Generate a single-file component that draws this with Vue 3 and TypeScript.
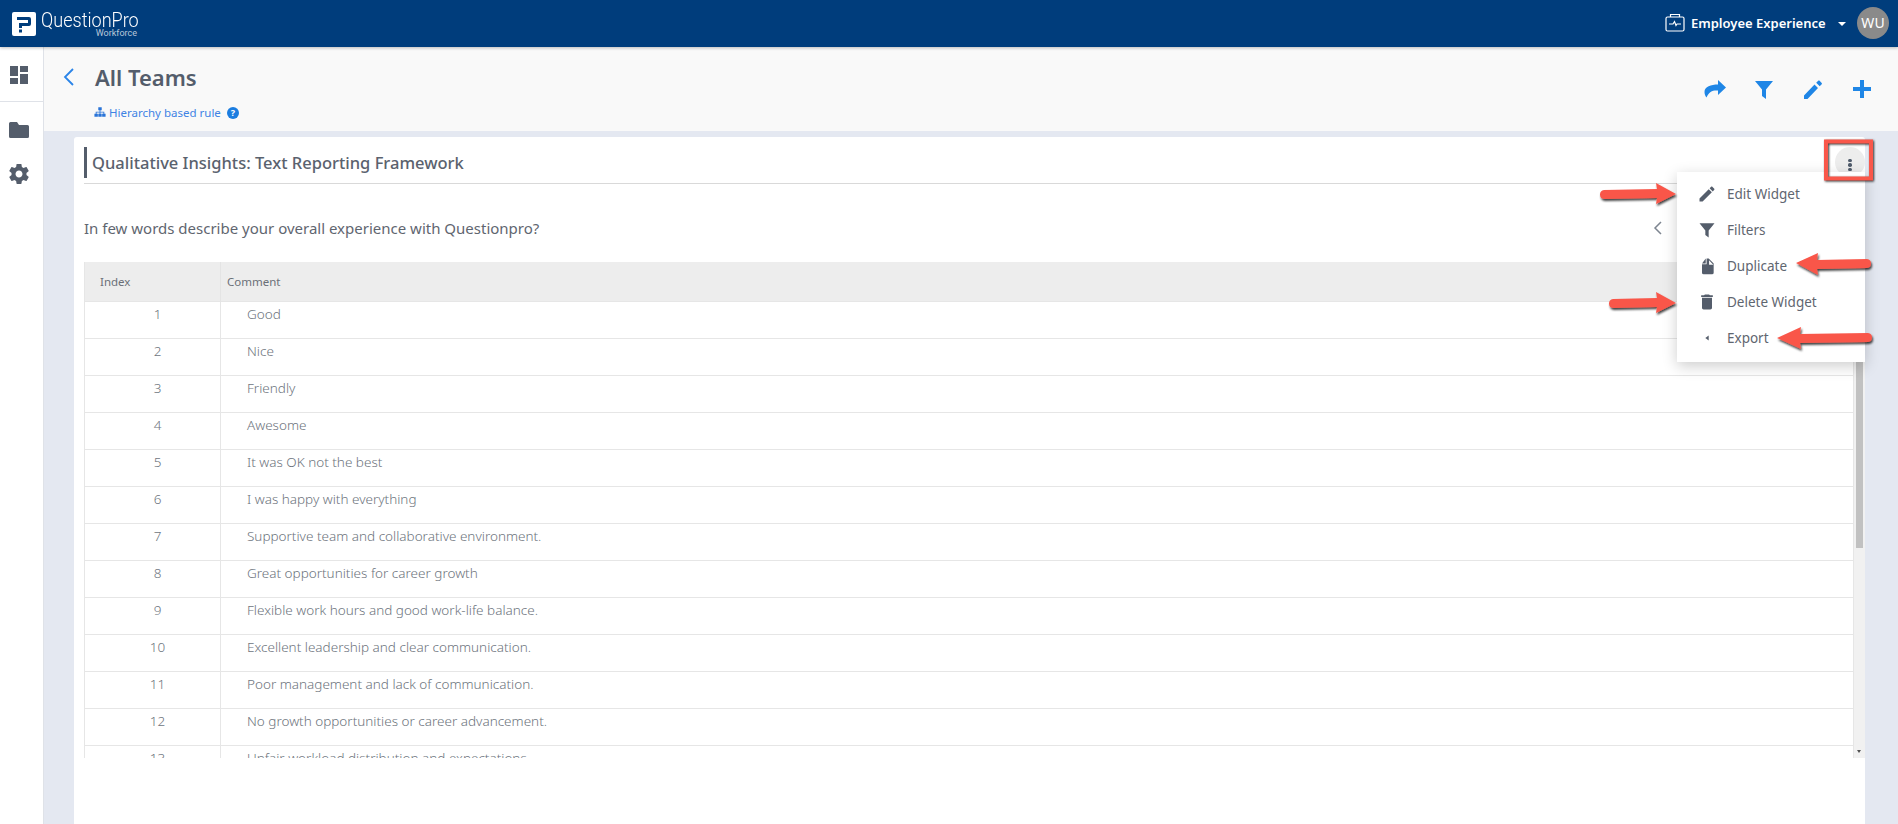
<script setup lang="ts">
const comments: string[] = [
  "Good",
  "Nice",
  "Friendly",
  "Awesome",
  "It was OK not the best",
  "I was happy with everything",
  "Supportive team and collaborative environment.",
  "Great opportunities for career growth",
  "Flexible work hours and good work-life balance.",
  "Excellent leadership and clear communication.",
  "Poor management and lack of communication.",
  "No growth opportunities or career advancement.",
  "Unfair workload distribution and expectations.",
];

const menuItems = [
  { label: "Edit Widget", d: "M3 17.25V21h3.75L17.81 9.94l-3.75-3.75L3 17.25zM20.71 7.04c.39-.39.39-1.02 0-1.41l-2.34-2.34c-.39-.39-1.02-.39-1.41 0l-1.83 1.83 3.75 3.75 1.83-1.83z" },
  { label: "Filters", d: "M3 4h18l-7 8.5V21l-4-3v-5.5z" },
  { label: "Duplicate", d: "M11.500 3H14l6 6v11a2 2 0 0 1-2 2H8a2 2 0 0 1-2-2V10h5.500zM10.500 3v6H6zM14.500 5v5.500H19.500z" },
  { label: "Delete Widget", d: "M6 19c0 1.1.9 2 2 2h8c1.1 0 2-.9 2-2V7H6v12zM19 4h-3.5l-1-1h-5l-1 1H5v2h14V4z" },
  { label: "Export", d: "M14 9l-4 3 4 3z" },
];
</script>

<template>
  <div class="page">
    <header class="topbar">
      <div class="brand">
        <svg class="logo" viewBox="0 0 24 24">
          <rect width="24" height="24" rx="2" fill="#fff" />
          <path d="M5 5h12a2 2 0 0 1 2 2v5a2 2 0 0 1-2 2h-7v2H7v-5h9V8H5z" fill="#003d7c" />
          <rect x="7" y="17.500" width="3" height="3" fill="#003d7c" />
        </svg>
        <div class="brand-text">
          <span class="brand-name">QuestionPro</span>
          <span class="brand-sub">Workforce</span>
        </div>
      </div>
      <div class="product">
        <svg class="product-icon" viewBox="0 0 20 20" fill="none" stroke="#fff" stroke-width="1.2">
          <rect x="1" y="4" width="18" height="14" rx="1.5" />
          <path d="M5.500 4V1.500h9V4" />
          <path d="M4 11h4l1.500-2.500 1.500 4 1-1.500h4" />
        </svg>
        <span class="product-name">Employee Experience</span>
        <span class="caret"></span>
        <span class="avatar">WU</span>
      </div>
    </header>

    <div class="layout">
      <aside class="sidebar">
        <div class="side-top">
          <svg viewBox="0 0 24 24" width="24" height="24"><path d="M3 13h8V3H3v10zm0 8h8v-6H3v6zm10 0h8V11h-8v10zm0-18v6h8V3h-8z" /></svg>
        </div>
        <div class="side-rest">
          <svg viewBox="0 0 24 24" width="24" height="24"><path d="M10 4H3.500A1.500 1.500 0 0 0 2 5.500v13A1.500 1.500 0 0 0 3.500 20h17a1.500 1.500 0 0 0 1.500-1.500v-10A1.500 1.500 0 0 0 20.500 7H12z" /></svg>
          <svg viewBox="0 0 24 24" width="24" height="24"><path d="M19.430 12.980c.04-.32.07-.64.07-.98s-.03-.66-.07-.98l2.110-1.650c.19-.15.24-.42.120-.64l-2-3.460c-.12-.22-.39-.3-.61-.22l-2.490 1c-.52-.4-1.080-.73-1.690-.98l-.38-2.650C14.460 2.180 14.250 2 14 2h-4c-.25 0-.46.18-.49.420l-.38 2.650c-.61.25-1.170.59-1.690.98l-2.490-1c-.23-.09-.49 0-.61.22l-2 3.460c-.13.22-.07.49.12.64l2.110 1.650c-.04.32-.07.65-.07.98s.03.66.07.98l-2.110 1.650c-.19.15-.24.42-.12.64l2 3.460c.12.22.39.3.61.22l2.490-1c.52.4 1.080.73 1.690.98l.38 2.650c.03.24.24.42.49.42h4c.25 0 .46-.18.49-.42l.38-2.650c.61-.25 1.170-.59 1.690-.98l2.490 1c.23.09.49 0 .61-.22l2-3.460c.12-.22.07-.49-.12-.64l-2.110-1.650zM12 15.500c-1.930 0-3.500-1.570-3.500-3.500s1.570-3.500 3.500-3.500 3.500 1.570 3.500 3.500-1.570 3.500-3.500 3.500z" /></svg>
        </div>
      </aside>

      <main class="main">
        <section class="head">
          <div class="head-left">
            <div class="title-row">
              <svg class="back" viewBox="0 0 12 18" fill="none" stroke="#2a84e8" stroke-width="1.800">
                <path d="M10 1L2 9l8 8" />
              </svg>
              <h1>All Teams</h1>
            </div>
            <div class="rule">
              <svg viewBox="0 0 14 12" width="12" height="11" fill="#2a74d8">
                <path d="M5 0h4v3.500H7.500V5H12v2.500h1.500V11h-4V7.500H11V6H7.500v1.500H9V11H5V7.500h1.500V6H3v1.500h1.500V11h-4V7.500H2V5h4.500V3.500H5z" />
              </svg>
              <span>Hierarchy based rule</span>
              <span class="help">?</span>
            </div>
          </div>
          <div class="head-actions">
            <svg viewBox="0 0 24 24" width="24" height="24"><path d="M15 3l8 7.500-8 7.500v-4.500c-5-.5-9 .8-11.500 7-1-1-2-3-2-5.500C1.500 9.500 8 7.500 15 7.500z" /></svg>
            <svg viewBox="0 0 24 24" width="24" height="24"><path d="M3 4h18l-7 8.500V22l-4-3v-6.500z" /></svg>
            <svg viewBox="0 0 24 24" width="24" height="24"><path d="M3 18.500V22h3.500L17 11l-3.500-3.500zM20.700 7.300c.4-.4.4-1 0-1.400l-2.100-2.100c-.4-.4-1-.4-1.400 0L15.200 5.800l3.500 3.500z" /></svg>
            <svg viewBox="0 0 24 24" width="24" height="24"><path d="M10 3h4v7h7v4h-7v7h-4v-7H3v-4h7z" /></svg>
          </div>
        </section>

        <section class="content">
          <div class="card">
            <div class="card-head">
              <h2>Qualitative Insights: Text Reporting Framework</h2>
              <button class="dots"><i></i><i></i><i></i></button>
            </div>

            <div class="question">
              <p>In few words describe your overall experience with Questionpro?</p>
              <svg class="pager" viewBox="0 0 10 14" fill="none" stroke="#7d8590" stroke-width="1.500"><path d="M8 1L2 7l6 6" /></svg>
            </div>

            <div class="table-wrap">
              <table>
                <colgroup>
                  <col class="col-index" />
                  <col />
                </colgroup>
                <thead>
                  <tr>
                    <th>Index</th>
                    <th>Comment</th>
                  </tr>
                </thead>
                <tbody>
                  <tr v-for="(c, i) in comments" :key="c">
                    <td class="idx">{{ i + 1 }}</td>
                    <td class="txt">{{ c }}</td>
                  </tr>
                </tbody>
              </table>
              <div class="scrollbar">
                <div class="thumb"></div>
                <span class="down"></span>
              </div>
            </div>

            <ul class="menu">
              <li v-for="m in menuItems" :key="m.label">
                <svg viewBox="0 0 24 24" width="20" height="20"><path :d="m.d" fill-rule="evenodd" /></svg>
                <span>{{ m.label }}</span>
              </li>
            </ul>
          </div>
        </section>
      </main>
    </div>

    <!-- screenshot annotations drawn on top of the page -->
    <svg class="marks" viewBox="0 0 1898 824" width="1898" height="824">
      <defs>
        <filter id="sh" x="-20%" y="-40%" width="140%" height="180%">
          <feDropShadow dx="1" dy="2" stdDeviation="1.200" flood-color="#000" flood-opacity="0.75" />
        </filter>
      </defs>
      <rect class="box" x="1826" y="141.500" width="45" height="37" />
      <g filter="url(#sh)" fill="#f9574a">
        <path d="M1604 190l53-1-1-6 20 11-20 10 1-6-53 1q-4-.500-4-4.500t4-4.500z" />
        <path d="M1796 263l22-10-1 7 50-1q4 .500 4 4.500t-4 4.500l-50 1 1 6z" />
        <path d="M1613 299l44-1-1-6 20 11-20 10 1-6-44 1q-4-.500-4-4.500t4-4.500z" />
        <path d="M1777 338l24-11-1 7 68-1q4 .500 4 4.500t-4 4.500l-68 1 1 6z" />
      </g>
    </svg>
  </div>
</template>

<style>
html,
body {
  margin: 0;
  padding: 0;
  overflow: hidden;
}
</style>

<style scoped>
.page {
  position: relative;
  width: 1898px;
  height: 824px;
  overflow: hidden;
  font-family: "Noto Sans", Roboto, sans-serif;
  color: #545d6b;
  background: #e4e8f1;
}

.topbar {
  position: relative;
  z-index: 3;
  display: flex;
  justify-content: space-between;
  align-items: center;
  height: 47px;
  padding: 0 9px 0 12px;
  background: #003d7c;
  box-shadow: 0 1px 3px rgba(0, 0, 0, 0.25);
}
.brand {
  display: flex;
  align-items: center;
  gap: 5px;
}
.logo {
  width: 24px;
  height: 24px;
}
.brand-text {
  display: flex;
  flex-direction: column;
  align-items: flex-end;
  width: 96px;
  color: #fff;
  margin-top: 1px;
}
.brand-name {
  align-self: flex-start;
  font-family: Roboto, sans-serif;
  font-size: 21px;
  font-weight: 300;
  line-height: 18px;
  white-space: nowrap;
  transform: scaleX(0.86);
  transform-origin: left center;
}
.brand-sub {
  font-family: Roboto, sans-serif;
  font-size: 9px;
  line-height: 8px;
  color: #b9c8da;
}
.product {
  display: flex;
  align-items: center;
  color: #fff;
  margin-top: -2px;
}
.product-icon {
  width: 20px;
  height: 20px;
  margin-right: 6px;
}
.product-name {
  font-size: 13px;
  font-weight: 600;
  width: 135px;
  white-space: nowrap;
}
.caret {
  width: 0;
  height: 0;
  margin: 2px 11px 0 12px;
  border-left: 4px solid transparent;
  border-right: 4px solid transparent;
  border-top: 4px solid #fff;
}
.avatar {
  display: flex;
  align-items: center;
  justify-content: center;
  width: 32px;
  height: 32px;
  border-radius: 50%;
  background: #8a8a8a;
  font-size: 14px;
  color: #fff;
}

.layout {
  display: flex;
  height: 777px;
}
.sidebar {
  width: 43px;
  background: #fff;
  border-right: 1px solid #dfe2e8;
  flex: none;
}
.sidebar svg {
  display: block;
  fill: #545d6b;
}
.side-top {
  height: 55px;
  padding: 16px 0 0 7px;
  box-sizing: border-box;
  border-bottom: 1px solid #dfe2e8;
}
.side-rest {
  display: flex;
  flex-direction: column;
  gap: 20px;
  padding: 16px 0 0 7px;
}

.main {
  flex: 1;
  min-width: 0;
  display: flex;
  flex-direction: column;
}
.head {
  display: flex;
  justify-content: space-between;
  height: 84px;
  padding: 0 24px 0 19px;
  box-sizing: border-box;
  background: #f9f9f9;
}
.title-row {
  display: flex;
  align-items: center;
  gap: 20px;
  height: 58px;
  padding-top: 2px;
  box-sizing: border-box;
}
.back {
  width: 12px;
  height: 18px;
}
h1 {
  margin: 0;
  font-size: 22px;
  font-weight: 600;
  color: #545d6b;
}
.rule {
  display: flex;
  align-items: center;
  gap: 3px;
  padding-left: 31px;
  font-size: 11.5px;
  color: #3f83e4;
}
.help {
  display: flex;
  align-items: center;
  justify-content: center;
  width: 12px;
  height: 12px;
  margin-left: 3px;
  border-radius: 50%;
  background: #1b7de0;
  color: #fff;
  font-size: 9px;
  font-weight: 700;
}
.head-actions {
  display: flex;
  gap: 25px;
  padding-top: 30px;
}
.head-actions svg {
  fill: #1f86e6;
}

.content {
  flex: 1;
  min-height: 0;
  padding: 6px 33px 0 30px;
}
.card {
  position: relative;
  height: 100%;
  box-sizing: border-box;
  padding: 10px 11px 0 10px;
  background: #fff;
  border-radius: 3px 3px 0 0;
}
.card-head {
  display: flex;
  align-items: flex-start;
  justify-content: space-between;
  height: 31px;
  padding-bottom: 5px;
  border-bottom: 1px solid #d9d9d9;
}
h2 {
  margin: 0;
  padding-left: 5px;
  border-left: 3px solid #545d6b;
  font-size: 16.5px;
  font-weight: 500;
  line-height: 31px;
  color: #5a626e;
}
.dots {
  flex: none;
  display: flex;
  flex-direction: column;
  align-items: center;
  justify-content: center;
  gap: 1px;
  width: 30px;
  height: 30px;
  margin: 0 -11px 0 0;
  padding: 6px 0 0;
  border: none;
  border-radius: 50%;
  background: #ededed;
}
.dots i {
  width: 3.500px;
  height: 3.500px;
  border-radius: 50%;
  background: #4f5b6b;
}
.question {
  display: flex;
  justify-content: space-between;
  align-items: center;
  height: 78px;
  padding: 10px 191px 0 0;
  box-sizing: border-box;
}
.question p {
  margin: 0;
  font-size: 15px;
  color: #5f6670;
}
.pager {
  width: 10px;
  height: 14px;
}

.table-wrap {
  display: flex;
  height: 496px;
  margin-right: -11px;
  overflow: hidden;
}
table {
  flex: 1;
  min-width: 0;
  height: fit-content;
  table-layout: fixed;
  border-collapse: collapse;
  border-left: 1px solid #e6e6e6;
}
.col-index {
  width: 136px;
}
th {
  height: 39px;
  padding: 0 0 0 6px;
  text-align: left;
  font-size: 11.5px;
  font-weight: 400;
  color: #6b7078;
  background: #ededed;
  border-right: 1px solid #e4e4e4;
}
th:first-child {
  padding-left: 15px;
}
td {
  height: 37px;
  padding: 3px 0 0;
  vertical-align: top;
  font-size: 13.500px;
  font-weight: 300;
  color: #6d747d;
  border-top: 1px solid #e6e6e6;
  border-bottom: 1px solid #e6e6e6;
  box-sizing: border-box;
  line-height: 18px;
}
td.idx {
  padding-left: 10px;
  text-align: center;
  border-right: 1px solid #e6e6e6;
}
td.txt {
  padding-left: 26px;
}
.scrollbar {
  position: relative;
  flex: none;
  width: 12px;
  background: #f1f1f1;
  border-left: 1px solid #e6e6e6;
  box-sizing: border-box;
}
.thumb {
  position: absolute;
  left: 2px;
  top: 18px;
  width: 7px;
  height: 268px;
  background: #c1c1c1;
}
.down {
  position: absolute;
  left: 3px;
  bottom: 5px;
  width: 0;
  height: 0;
  border-left: 2.500px solid transparent;
  border-right: 2.500px solid transparent;
  border-top: 3px solid #505050;
}

.menu {
  position: absolute;
  top: 35px;
  right: 0;
  width: 188px;
  margin: 0;
  padding: 4px 0 6px;
  box-sizing: border-box;
  list-style: none;
  background: #fff;
  box-shadow: 0 4px 14px rgba(0, 0, 0, 0.2);
}
.menu li {
  display: flex;
  align-items: center;
  gap: 10px;
  height: 36px;
  padding-left: 20px;
  font-size: 13.500px;
  color: #5f6670;
}
.menu svg {
  fill: #545d6b;
}

.marks {
  position: absolute;
  left: 0;
  top: 0;
  pointer-events: none;
  z-index: 5;
}
.box {
  fill: none;
  stroke: #f9574a;
  stroke-width: 4;
  filter: drop-shadow(1px 1px 1px rgba(0, 0, 0, 0.8));
}
</style>
